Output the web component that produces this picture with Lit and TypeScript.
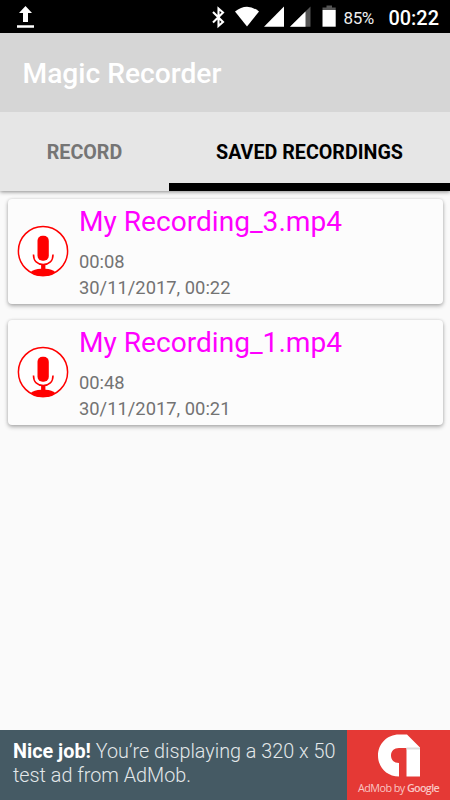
import { LitElement, html, css } from "lit";
import { customElement, property } from "lit/decorators.js";

interface Recording {
  name: string;
  length: string;
  date: string;
}

const recordings: Recording[] = [
  { name: "My Recording_3.mp4", length: "00:08", date: "30/11/2017, 00:22" },
  { name: "My Recording_1.mp4", length: "00:48", date: "30/11/2017, 00:21" },
];

@customElement("status-bar")
class StatusBar extends LitElement {
  static styles = css`
    :host { display: flex; align-items: center; height: 33px; background: #000; color: #fff; box-sizing: border-box; padding: 0 11px 0 17px; }
    svg { display: block; flex: none; }
    .upload { margin-right: auto; }
    .battery { font-size: 17px; line-height: 33px; margin-left: 7px; width: 32px; white-space: nowrap; letter-spacing: -0.4px; padding-top: 3px; color: #eee; }
    .clock { font-size: 19.9px; font-weight: 500; line-height: 33px; margin-left: 13px; width: 50.5px; white-space: nowrap; padding-top: 3px; }
  `;
  render() {
    return html`
      <svg class="upload" width="18" height="33" viewBox="0 0 18 33" fill="#fff">
        <path d="M8.5 6 L15 13 H11 V22 H6 V13 H2Z M0 25.2H17V27.8H0Z" />
      </svg>
      <svg width="126" height="33" viewBox="211 0 126 33">
        <path d="M213 12 L223 22 L218.5 26 V8.5 L223 12.5 L213 22.5" fill="none" stroke="#fff" stroke-width="2.1" />
        <path d="M235 11.5 Q247 2 259 11.5 L247 26.5Z" fill="#fff" />
        <path d="M284 6.5 V26.7 H264Z" fill="#fff" />
        <path d="M310.5 6.5 V26.7 H290Z" fill="#555" />
        <path d="M305.5 11.5 V26.7 H290Z" fill="#fff" />
        <path d="M322.5 10V7.5H326.5V5.5H332V7.5H335.7V10Z" fill="#555" />
        <path d="M322.5 10H335.7V26.7H322.5Z" fill="#fff" />
      </svg>
      <span class="battery">85%</span>
      <span class="clock">00:22</span>
    `;
  }
}

@customElement("recording-card")
class RecordingCard extends LitElement {
  @property({ attribute: false }) item!: Recording;
  static styles = css`
    :host { display: flex; height: 105px; border-radius: 4px; background: #fcfcfc; box-shadow: 0 2px 4px rgba(0, 0, 0, 0.3), 0 0 3px rgba(0, 0, 0, 0.12); }
    .mic { flex: none; margin: 26px 10px 0 9px; }
    .name { color: #f0f; font-size: 28.1px; line-height: 45px; margin-bottom: 5px; white-space: nowrap; }
    .meta { color: #737373; font-size: 18.35px; line-height: 26px; white-space: nowrap; }
  `;
  render() {
    return html`
      <svg class="mic" width="52" height="52" viewBox="0 0 52 52">
        <circle cx="26" cy="26" r="24.6" fill="#fff" stroke="#f00" stroke-width="1.5" />
        <rect x="20.5" y="10.8" width="11.3" height="25" rx="5" fill="#f00" />
        <path d="M16.5 29.5 C16.5 36 20.5 39.5 26.2 39.5 C32 39.5 36 36 36 29.5" fill="none" stroke="#f00" stroke-width="1.6" />
        <path d="M24.1 39H28.4V45H24.1Z" fill="#f00" />
        <path d="M13.5 47.3 Q17 43.8 24 43.8 H28.5 Q35 43.8 38.5 47.3 Q33 51.3 26 51.3 Q19 51.3 13.5 47.3Z" fill="#f00" />
      </svg>
      <div>
        <div class="name">${this.item.name}</div>
        <div class="meta">${this.item.length}</div>
        <div class="meta">${this.item.date}</div>
      </div>
    `;
  }
}

@customElement("ad-banner")
class AdBanner extends LitElement {
  static styles = css`
    :host { display: flex; height: 70px; background: #455a64; color: #e3e8ea; }
    .copy { flex: 1; padding: 10px 0 0 13px; font-size: 19.8px; line-height: 23.5px; font-weight: 300; white-space: nowrap; }
    b { font-weight: 700; color: #fff; }
    .brand { width: 103px; background: #e53935; display: flex; flex-direction: column; align-items: center; }
    svg { display: block; margin-top: 4px; margin-left: 1px; }
    .by { font: 10.8px/16px "Open Sans", sans-serif; color: #f9c5c3; margin-top: 2px; white-space: nowrap; letter-spacing: -0.55px; }
    .google { font-weight: 600; letter-spacing: -0.7px; }
  `;
  render() {
    return html`
      <div class="copy"><b>Nice job!</b> You’re displaying a 320 x 50<br />test ad from AdMob.</div>
      <div class="brand">
        <svg width="44" height="44" viewBox="0 0 44 44">
          <path d="M22 .5 H30 L43 13.5 V42.5 H29.5 V14 H22 C17 14 14 17 14 21.5 C14 26 17 29 22 29 V42.5 C9.5 42.5 1 33 1 21.5 C1 10 10 .5 22 .5Z" fill="#fff" />
          <path d="M29.5 13.5H43V15.5H29.5Z" fill="#ddd" />
        </svg>
        <div class="by">AdMob by <span class="google">Google</span></div>
      </div>
    `;
  }
}

@customElement("app-root")
class AppRoot extends LitElement {
  static styles = css`
    :host { display: flex; flex-direction: column; height: 800px; width: 450px; overflow: hidden; background: #fafafa; font-family: Roboto, sans-serif; }
    status-bar, .title { position: relative; z-index: 1; }
    .title { height: 79px; background: #d6d6d6; color: #fff; font-size: 28.2px; font-weight: 500; line-height: 82px; padding-left: 22.5px; }
    .tabs { display: flex; height: 79px; background: #e6e6e6; box-shadow: 0 1px 4px rgba(0, 0, 0, 0.45); font-size: 19.7px; font-weight: 700; line-height: 82px; text-align: center; }
    .tab { width: 169px; color: #757575; white-space: nowrap; }
    .active { width: 281px; color: #000; box-shadow: inset 0 -8px #000; }
    .list { flex: 1; display: flex; flex-direction: column; gap: 16px; padding: 8px 7px 0 8px; }
  `;
  render() {
    return html`
      <status-bar></status-bar>
      <div class="title">Magic Recorder</div>
      <div class="tabs">
        <div class="tab">RECORD</div>
        <div class="tab active">SAVED RECORDINGS</div>
      </div>
      <div class="list">${recordings.map((r) => html`<recording-card .item=${r}></recording-card>`)}</div>
      <ad-banner></ad-banner>
    `;
  }
}
